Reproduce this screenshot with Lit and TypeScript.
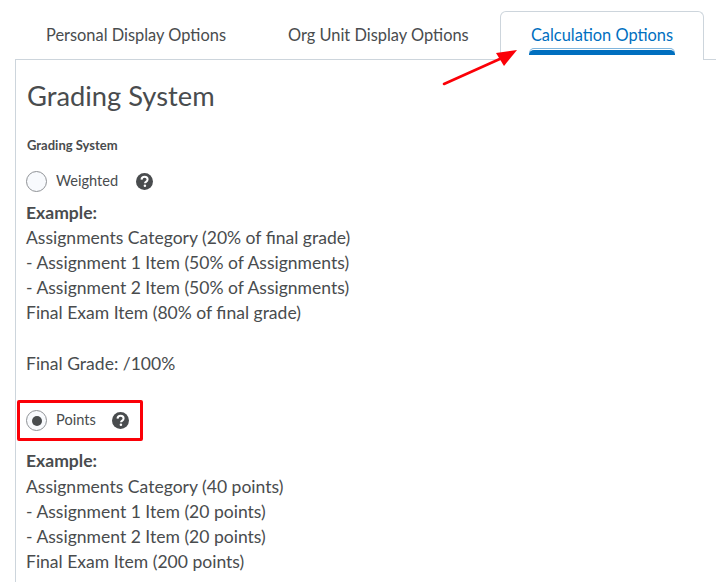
import { LitElement, html, css } from "lit";
import { customElement } from "lit/decorators.js";

const helpIcon = html`<svg class="help" width="17" height="17" viewBox="0 0 16 16">
  <circle cx="8" cy="8" r="8" fill="#494c4e"></circle>
  <path d="M5.2 6.2C5.3 4.6 6.5 3.6 8.1 3.6c1.6 0 2.8 1 2.8 2.4 0 1.2-.7 1.8-1.5 2.3-.6.4-.9.7-.9 1.4" fill="none" stroke="#fff" stroke-width="1.9"></path>
  <circle cx="8.4" cy="12" r="1.2" fill="#fff"></circle>
</svg>`;

@customElement("app-root")
export class AppRoot extends LitElement {
  static styles = css`
    :host {
      display: block;
      position: relative;
      width: 716px;
      height: 582px;
      overflow: hidden;
      background: #fff;
      color: #494c4e;
      font-family: Lato, "Liberation Sans", sans-serif;
    }
    .tabs {
      display: flex;
      height: 60px;
      box-sizing: border-box;
      padding-left: 31px;
      border-bottom: 1px solid #cdd5dc;
      margin-left: 15px;
    }
    .tab {
      box-sizing: border-box;
      height: 60px;
      padding-top: 23px;
      font-size: 16.4px;
      line-height: 24px;
      white-space: nowrap;
      text-align: center;
    }
    .tab.personal {
      width: 180px;
      margin-right: 62px;
    }
    .tab.org {
      width: 180px;
      margin-right: 32px;
    }
    .tab.active {
      width: 204px;
      height: 49px;
      margin-top: 11px;
      padding-top: 11px;
      border: 1px solid #cdd5dc;
      border-bottom: none;
      border-radius: 6px 6px 0 0;
      background: #fff;
      color: #006fbf;
    }
    .indicator {
      display: block;
      width: 146px;
      height: 5px;
      margin: 2px auto 0;
      background: #006fbf;
      border-top: 1px solid #fff;
      border-radius: 5px 5px 0 0;
      box-shadow: 0 -1px 0 #7fb5dd;
    }
    .panel {
      margin-left: 15px;
      height: 522px;
      box-sizing: border-box;
      padding: 0 0 0 11px;
      border-left: 1px solid #cdd5dc;
    }
    h1 {
      margin: 0;
      padding-top: 18px;
      font-size: 27.3px;
      font-weight: 400;
      line-height: 36px;
    }
    .label {
      margin-top: 23px;
      font-size: 13px;
      font-weight: 700;
      line-height: 16px;
    }
    .option {
      display: flex;
      align-items: center;
      height: 22px;
      font-size: 14.6px;
    }
    .weighted {
      margin-top: 17px;
      margin-left: -1px;
    }
    .radio {
      box-sizing: border-box;
      width: 21px;
      height: 21px;
      border-radius: 50%;
      border: 1px solid #8f9296;
      background: #f8fafd;
      display: flex;
      align-items: center;
      justify-content: center;
      margin-right: 9px;
      flex: none;
    }
    .radio i {
      display: block;
      width: 10px;
      height: 10px;
      border-radius: 50%;
      background: #494c4e;
    }
    .option span {
      position: relative;
      top: -1px;
    }
    .weighted .help {
      margin-left: 18px;
    }
    .points-box {
      box-sizing: border-box;
      display: flex;
      align-items: center;
      width: 126px;
      height: 41px;
      margin: 24px 0 0 -10px;
      padding-left: 6px;
      border: 3px solid #fb0007;
      border-radius: 2px;
    }
    .points-box .help {
      margin-left: 16px;
    }
    .example {
      font-size: 17.55px;
      line-height: 25px;
      margin-left: -1px;
    }
    .example b {
      display: block;
      font-weight: 700;
    }
    .first {
      margin-top: 8px;
    }
    .second {
      margin-top: 7px;
    }
    .second b {
      margin-bottom: 1px;
    }
    .grade {
      margin-top: 26px;
    }
    .arrow {
      position: absolute;
      left: 436px;
      top: 44px;
    }
  `;

  render() {
    return html`
      <div class="tabs">
        <div class="tab personal">Personal Display Options</div>
        <div class="tab org">Org Unit Display Options</div>
        <div class="tab active">
          Calculation Options
          <span class="indicator"></span>
        </div>
      </div>
      <div class="panel">
        <h1>Grading System</h1>
        <div class="label">Grading System</div>
        <div class="option weighted">
          <div class="radio"></div>
          <span>Weighted</span>
          ${helpIcon}
        </div>
        <div class="example first">
          <b>Example:</b>
          <div>Assignments Category (20% of final grade)</div>
          <div>- Assignment 1 Item (50% of Assignments)</div>
          <div>- Assignment 2 Item (50% of Assignments)</div>
          <div>Final Exam Item (80% of final grade)</div>
          <div class="grade">Final Grade: /100%</div>
        </div>
        <div class="points-box">
          <div class="option">
            <div class="radio"><i></i></div>
            <span>Points</span>
            ${helpIcon}
          </div>
        </div>
        <div class="example second">
          <b>Example:</b>
          <div>Assignments Category (40 points)</div>
          <div>- Assignment 1 Item (20 points)</div>
          <div>- Assignment 2 Item (20 points)</div>
          <div>Final Exam Item (200 points)</div>
        </div>
      </div>
      <svg class="arrow" width="90" height="44" viewBox="0 0 90 44">
        <line x1="8" y1="40" x2="66" y2="14" stroke="#fb0007" stroke-width="2.6" stroke-linecap="round"></line>
        <polygon points="81,6 60,9 68,22" fill="#fb0007"></polygon>
      </svg>
    `;
  }
}
